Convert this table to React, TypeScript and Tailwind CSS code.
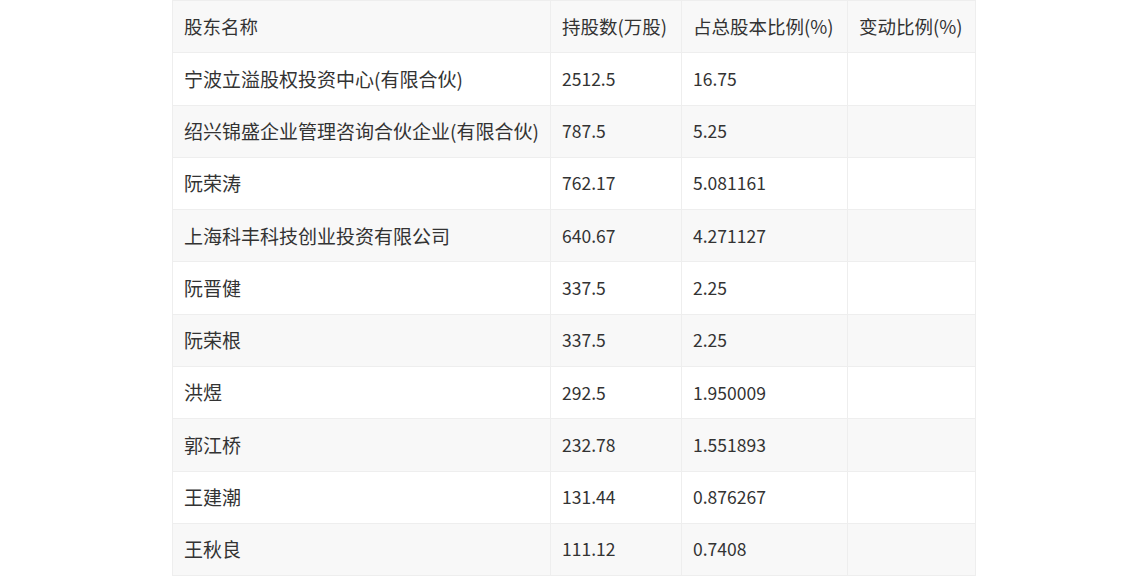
import React from "react";

const rows: [string, string, string, string][] = [
  ["宁波立溢股权投资中心(有限合伙)", "2512.5", "16.75", ""],
  ["绍兴锦盛企业管理咨询合伙企业(有限合伙)", "787.5", "5.25", ""],
  ["阮荣涛", "762.17", "5.081161", ""],
  ["上海科丰科技创业投资有限公司", "640.67", "4.271127", ""],
  ["阮晋健", "337.5", "2.25", ""],
  ["阮荣根", "337.5", "2.25", ""],
  ["洪煜", "292.5", "1.950009", ""],
  ["郭江桥", "232.78", "1.551893", ""],
  ["王建潮", "131.44", "0.876267", ""],
  ["王秋良", "111.12", "0.7408", ""],
];

export default function App() {
  return (
    <div
      className="w-[1148px] h-[576px] bg-white overflow-hidden"
      style={{ fontFamily: '"Noto Sans CJK SC", "Noto Sans", sans-serif' }}
    >
      <table className="ml-[172px] border-collapse text-[#333] table-fixed w-[803px]">
        <colgroup>
          <col className="w-[378px]" />
          <col className="w-[131px]" />
          <col className="w-[166px]" />
          <col className="w-[128px]" />
        </colgroup>
        <thead>
          <tr className="bg-[#f8f8f8] h-[52.3px]">
            {["股东名称", "持股数(万股)", "占总股本比例(%)", "变动比例(%)"].map((h) => (
              <td key={h} className="border border-[#eeeeee] px-[11px] text-left text-[18.5px] font-normal whitespace-nowrap">
                {h}
              </td>
            ))}
          </tr>
        </thead>
        <tbody>
          {rows.map((r, i) => (
            <tr key={i} className={(i % 2 === 1 ? "bg-[#f8f8f8]" : "bg-white") + " h-[52.3px]"}>
              <td className="border border-[#eeeeee] px-[11px] text-[19px] whitespace-nowrap">{r[0]}</td>
              <td className="border border-[#eeeeee] px-[11px] text-[17.5px] whitespace-nowrap">{r[1]}</td>
              <td className="border border-[#eeeeee] px-[11px] text-[17.5px] whitespace-nowrap">{r[2]}</td>
              <td className="border border-[#eeeeee] px-[11px] text-[17.5px] whitespace-nowrap">{r[3]}</td>
            </tr>
          ))}
        </tbody>
      </table>
    </div>
  );
}
